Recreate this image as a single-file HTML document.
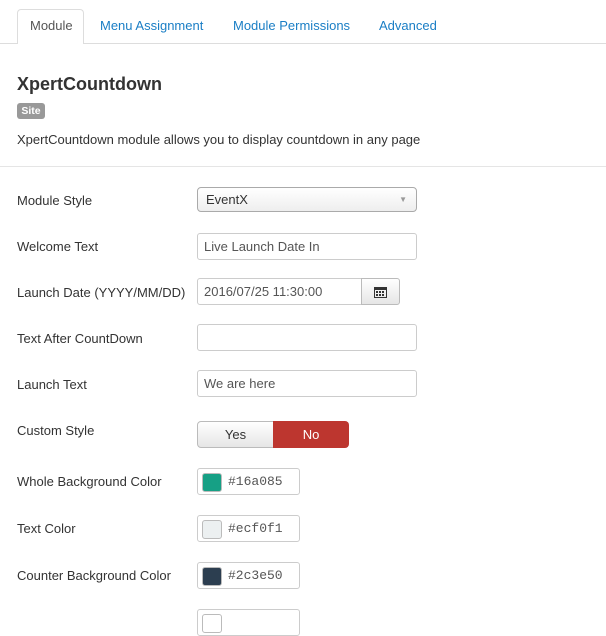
<!DOCTYPE html>
<html><head><style>
body{margin:0;width:606px;height:615px;overflow:hidden;background:#fff;font-family:"Liberation Sans",sans-serif;font-size:13px;color:#333;position:relative}
.a{position:absolute}
.tab{position:absolute;top:18px;color:#1a7ec5;font-size:13px}
.lbl{position:absolute;left:17px;font-size:13px;color:#333}
.in{position:absolute;left:197px;border:1px solid #ccc;border-radius:3px;box-sizing:border-box;height:27px;line-height:25px;padding-left:6px;font-size:13px;color:#555;background:#fff}
.col{width:103px;font-family:"Liberation Mono",monospace;font-size:13px;padding-left:30px}
.sw{position:absolute;left:4px;top:4px;width:20px;height:19px;border:1px solid #bbb;border-radius:3px;box-sizing:border-box}
</style></head><body>
<div class="a" style="left:0;top:43px;width:606px;border-top:1px solid #ddd"></div>
<div class="a" style="left:17px;top:9px;width:67px;height:35px;border:1px solid #ddd;border-bottom:none;border-radius:4px 4px 0 0;background:#fff;box-sizing:border-box"></div>
<div class="tab" style="left:30px;color:#555">Module</div>
<div class="tab" style="left:100px">Menu Assignment</div>
<div class="tab" style="left:233px">Module Permissions</div>
<div class="tab" style="left:379px">Advanced</div>
<div class="a" style="left:17px;top:74px;font-size:18px;font-weight:bold;color:#333">XpertCountdown</div>
<div class="a" style="left:17px;top:103px;width:28px;height:16px;background:#999;border-radius:3px;color:#fff;font-size:10.5px;font-weight:bold;text-align:center;line-height:16px">Site</div>
<div class="a" style="left:17px;top:132px;font-size:13px">XpertCountdown module allows you to display countdown in any page</div>
<div class="a" style="left:0;top:166px;width:606px;border-top:1px solid #e5e5e5"></div>

<div class="lbl" style="top:193px">Module Style</div>
<div class="in" style="top:187px;width:220px;height:25px;line-height:23px;border-radius:4px;border-color:#aaa;background:linear-gradient(#fff,#eee);color:#333;padding-left:8px">EventX<span style="position:absolute;right:9px;color:#999;font-size:8px">▼</span></div>
<div class="lbl" style="top:239px">Welcome Text</div>
<div class="in" style="top:233px;width:220px">Live Launch Date In</div>
<div class="lbl" style="top:285px">Launch Date (YYYY/MM/DD)</div>
<div class="in" style="top:278px;width:165px;border-radius:3px 0 0 3px">2016/07/25 11:30:00</div>
<div class="a" style="left:361px;top:278px;width:39px;height:27px;border:1px solid #bbb;border-radius:0 3px 3px 0;box-sizing:border-box;background:linear-gradient(#fff,#e6e6e6)">
<svg width="13" height="12" style="position:absolute;left:12px;top:7px"><rect x="0.5" y="1.5" width="12" height="10" fill="none" stroke="#333"/><rect x="0" y="1" width="13" height="3" fill="#333"/><g fill="#333"><rect x="2" y="5" width="2" height="2"/><rect x="5" y="5" width="2" height="2"/><rect x="8" y="5" width="2" height="2"/><rect x="2" y="8" width="2" height="2"/><rect x="5" y="8" width="2" height="2"/><rect x="8" y="8" width="2" height="2"/></g></svg></div>
<div class="lbl" style="top:331px">Text After CountDown</div>
<div class="in" style="top:324px;width:220px"></div>
<div class="lbl" style="top:377px">Launch Text</div>
<div class="in" style="top:370px;width:220px">We are here</div>
<div class="lbl" style="top:423px">Custom Style</div>
<div class="a" style="left:197px;top:421px;width:77px;height:27px;border:1px solid #bbb;border-radius:4px 0 0 4px;box-sizing:border-box;background:linear-gradient(#fff,#e6e6e6);text-align:center;line-height:25px;color:#333">Yes</div>
<div class="a" style="left:273px;top:421px;width:76px;height:27px;border-radius:0 4px 4px 0;background:#bd362f;text-align:center;line-height:27px;color:#fff">No</div>
<div class="lbl" style="top:474px">Whole Background Color</div>
<div class="in col" style="top:468px">#16a085<div class="sw" style="background:#16a085"></div></div>
<div class="lbl" style="top:521px">Text Color</div>
<div class="in col" style="top:515px">#ecf0f1<div class="sw" style="background:#ecf0f1"></div></div>
<div class="lbl" style="top:568px">Counter Background Color</div>
<div class="in col" style="top:562px">#2c3e50<div class="sw" style="background:#2c3e50"></div></div>
<div class="in col" style="top:609px"><div class="sw" style="background:#fff"></div></div>
</body></html>
